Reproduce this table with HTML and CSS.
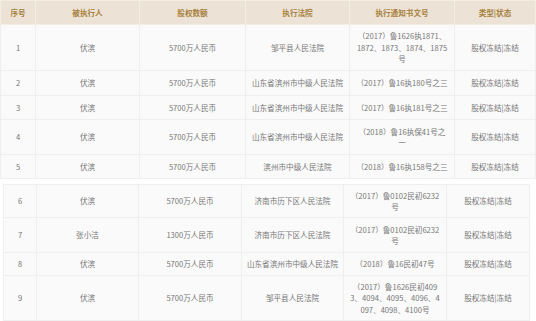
FILE: index.html
```html
<!DOCTYPE html>
<html lang="zh">
<head>
    <meta charset="UTF-8">
    <title>股权冻结</title>
    <link rel="stylesheet" href="styles.css">
</head>
<body>

<!-- Верхняя таблица -->
<table class="tbl tbl-top">
    <colgroup>
        <col style="width:35px"><col style="width:104px"><col style="width:106px">
        <col style="width:104px"><col style="width:105px"><col>
    </colgroup>
    <tr class="head">
        <th>序号</th><th>被执行人</th><th>股权数额</th><th>执行法院</th><th>执行通知书文号</th><th>类型|状态</th>
    </tr>
    <tr class="h46">
        <td>1</td><td>伏滨</td><td>5700万人民币</td><td>邹平县人民法院</td>
        <td class="doc">（2017）鲁1626执1871、1872、1873、1874、1875号</td><td>股权冻结|冻结</td>
    </tr>
    <tr class="h25">
        <td>2</td><td>伏滨</td><td>5700万人民币</td><td>山东省滨州市中级人民法院</td>
        <td class="doc">（2017）鲁16执180号之三</td><td>股权冻结|冻结</td>
    </tr>
    <tr class="h24">
        <td>3</td><td>伏滨</td><td>5700万人民币</td><td>山东省滨州市中级人民法院</td>
        <td class="doc">（2017）鲁16执181号之三</td><td>股权冻结|冻结</td>
    </tr>
    <tr class="h35">
        <td>4</td><td>伏滨</td><td>5700万人民币</td><td>山东省滨州市中级人民法院</td>
        <td class="doc">（2018）鲁16执保41号之一</td><td>股权冻结|冻结</td>
    </tr>
    <tr class="h24">
        <td>5</td><td>伏滨</td><td>5700万人民币</td><td>滨州市中级人民法院</td>
        <td class="doc">（2018）鲁16执158号之三</td><td>股权冻结|冻结</td>
    </tr>
</table>

<!-- Нижняя таблица -->
<table class="tbl tbl-bottom">
    <colgroup>
        <col style="width:33px"><col style="width:102px"><col style="width:103px">
        <col style="width:102px"><col style="width:103px"><col>
    </colgroup>
    <tr class="h33">
        <td>6</td><td>伏滨</td><td>5700万人民币</td><td>济南市历下区人民法院</td>
        <td class="doc">（2017）鲁0102民初6232号</td><td>股权冻结|冻结</td>
    </tr>
    <tr class="h35">
        <td>7</td><td>张小洁</td><td>1300万人民币</td><td>济南市历下区人民法院</td>
        <td class="doc">（2017）鲁0102民初6232号</td><td>股权冻结|冻结</td>
    </tr>
    <tr class="h23">
        <td>8</td><td>伏滨</td><td>5700万人民币</td><td>山东省滨州市中级人民法院</td>
        <td class="doc">（2018）鲁16民初47号</td><td>股权冻结|冻结</td>
    </tr>
    <tr class="h45">
        <td>9</td><td>伏滨</td><td>5700万人民币</td><td>邹平县人民法院</td>
        <td class="doc doc-long">（2017）鲁1626民初4093、4094、4095、4096、4097、4098、4100号</td><td>股权冻结|冻结</td>
    </tr>
</table>

</body>
</html>
```

FILE: styles.css
```css
* {
    margin: 0;
    padding: 0;
    box-sizing: border-box;
}

body, html {
    background: #fff;
    font-family: "Noto Sans CJK SC", "Noto Sans", sans-serif;
}

/* Таблицы */
.tbl {
    border-collapse: collapse;
    table-layout: fixed;
    font-size: 7.6px;
    color: #777;
}

.tbl-top {
    width: 536px;
}

.tbl-bottom {
    width: 527px;
    margin-left: 3px;
    margin-top: 5px;
}

.tbl th, .tbl td {
    text-align: center;
    vertical-align: middle;
    line-height: 11.5px;
    border: 1px solid #efefef;
    background: #fafafa;
    padding: 0 4px;
}

.tbl td.doc {
    padding: 0 5px;
}

/* Длинный номер режется по символам */
.tbl td.doc-long {
    word-break: break-all;
}

/* Шапка */
.tbl .head th {
    height: 24px;
    background: #ece3d6;
    border-color: #f3ede4;
    color: #a8813d;
    font-weight: bold;
}

.h23 td { height: 23px; }
.h24 td { height: 24px; }
.h25 td { height: 25px; }
.h33 td { height: 33px; }
.h35 td { height: 35px; }
.h45 td { height: 45px; }
.h46 td { height: 46px; }
```
